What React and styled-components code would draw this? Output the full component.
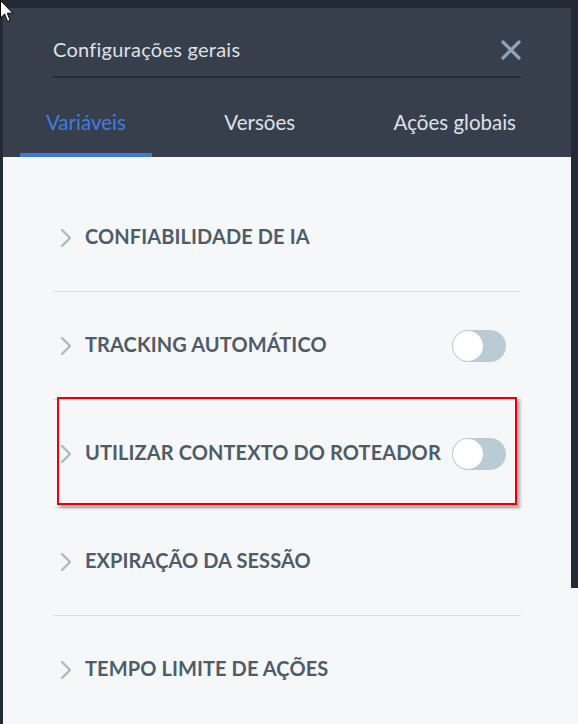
import React from "react";
import styled, { createGlobalStyle } from "styled-components";

const GlobalStyle = createGlobalStyle`
  body {
    margin: 0;
    padding: 0;
    background: #232a36;
    font-family: Lato, "Noto Sans", sans-serif;
  }
  * { box-sizing: border-box; }
`;

const Page = styled.div`
  position: relative;
  min-height: 100vh;
  padding: 8px 0 0 3px;
`;

const Frame = styled.div`
  display: flex;
  min-height: 716px;
  background: #f5f7f8;
`;

const Panel = styled.div`
  width: 568px;
  display: flex;
  flex-direction: column;
`;

const Gutter = styled.div`
  flex: 1;
  display: flex;
  flex-direction: column;
`;

const GutterShade = styled.div`
  height: 580px;
  background: #232a36;
`;

const Header = styled.header`
  background: #373f4d;
`;

const TitleRow = styled.div`
  margin: 0 50px;
  padding: 28px 0 12px;
  display: flex;
  align-items: center;
  justify-content: space-between;
  border-bottom: 2px solid #252b35;
`;

const Title = styled.h1`
  margin: 0;
  padding-bottom: 2px;
  font-size: 20px;
  line-height: 26px;
  font-weight: 400;
  letter-spacing: 0.25px;
  color: #dde2e8;
`;

const CloseButton = styled.button`
  border: 0;
  background: none;
  padding: 0;
  display: flex;
  cursor: pointer;
`;

const Tabs = styled.nav`
  display: flex;
  justify-content: space-between;
  padding: 0 29px 0 17px;
`;

const Tab = styled.div`
  padding: 30px 26px 17px;
  font-size: 20.5px;
  line-height: 28px;
  color: ${(p) => (p.active ? "#3f7de4" : "#dde2e8")};
  border-bottom: 4px solid ${(p) => (p.active ? "#3b78df" : "transparent")};
`;

const List = styled.div`
  padding: 27px 50px 0;
`;

const Row = styled.div`
  position: relative;
  height: 108px;
  display: flex;
  align-items: center;
  padding: 0 15px 0 7px;
  border-bottom: ${(p) => (p.last ? "none" : "1px solid #d3dfe5")};
`;

const Label = styled.span`
  flex: 1;
  margin-left: 13px;
  padding-bottom: 4px;
  font-size: 20px;
  font-weight: 700;
  color: #4e5c69;
  letter-spacing: 0.1px;
`;

const Track = styled.div`
  width: 54px;
  height: 32px;
  border-radius: 16px;
  background: #bacbd4;
  padding: 1px;
  display: flex;
`;

const Knob = styled.div`
  width: 30px;
  height: 30px;
  border-radius: 50%;
  background: #ffffff;
`;

const Highlight = styled.div`
  position: absolute;
  top: -3px;
  left: 4px;
  right: 4px;
  bottom: 2px;
  border: 2px solid #ee0000;
  box-shadow: 3px 3px 3px rgba(0, 0, 0, 0.3);
  pointer-events: none;
`;

const Pointer = styled.svg`
  position: absolute;
  top: 0;
  left: 0;
`;

const Chevron = () => (
  <svg width="12" height="20" viewBox="0 0 12 20">
    <path d="M2 2 L10 10 L2 18" fill="none" stroke="#a8bbc3" strokeWidth="2.4" strokeLinecap="round" strokeLinejoin="round" />
  </svg>
);

const CloseIcon = () => (
  <svg width="20" height="20" viewBox="0 0 20 20">
    <path d="M2 2 L18 18 M18 2 L2 18" stroke="#90a3b6" strokeWidth="3.2" strokeLinecap="round" />
  </svg>
);

const Toggle = () => (
  <Track>
    <Knob />
  </Track>
);

const items = [
  { label: "CONFIABILIDADE DE IA" },
  { label: "TRACKING AUTOMÁTICO", toggle: true },
  { label: "UTILIZAR CONTEXTO DO ROTEADOR", toggle: true, marked: true },
  { label: "EXPIRAÇÃO DA SESSÃO" },
  { label: "TEMPO LIMITE DE AÇÕES" },
];

export default function App() {
  return (
    <>
      <GlobalStyle />
      <Page>
        <Frame>
          <Panel>
            <Header>
              <TitleRow>
                <Title>Configurações gerais</Title>
                <CloseButton aria-label="Fechar">
                  <CloseIcon />
                </CloseButton>
              </TitleRow>
              <Tabs>
                <Tab active>Variáveis</Tab>
                <Tab>Versões</Tab>
                <Tab>Ações globais</Tab>
              </Tabs>
            </Header>
            <List>
              {items.map((item, i) => (
                <Row key={item.label} last={i === items.length - 1}>
                  <Chevron />
                  <Label>{item.label}</Label>
                  {item.toggle && <Toggle />}
                  {item.marked && <Highlight />}
                </Row>
              ))}
            </List>
          </Panel>
          <Gutter>
            <GutterShade />
          </Gutter>
        </Frame>
        <Pointer width="14" height="24" viewBox="0 0 14 24">
          <path d="M0.5 0.5 L0.5 18 L4.6 14 L7.6 21.5 L10.2 20.4 L7.3 13.2 L12.8 13.2 Z" fill="#ffffff" stroke="#000000" strokeWidth="1" />
        </Pointer>
      </Page>
    </>
  );
}
